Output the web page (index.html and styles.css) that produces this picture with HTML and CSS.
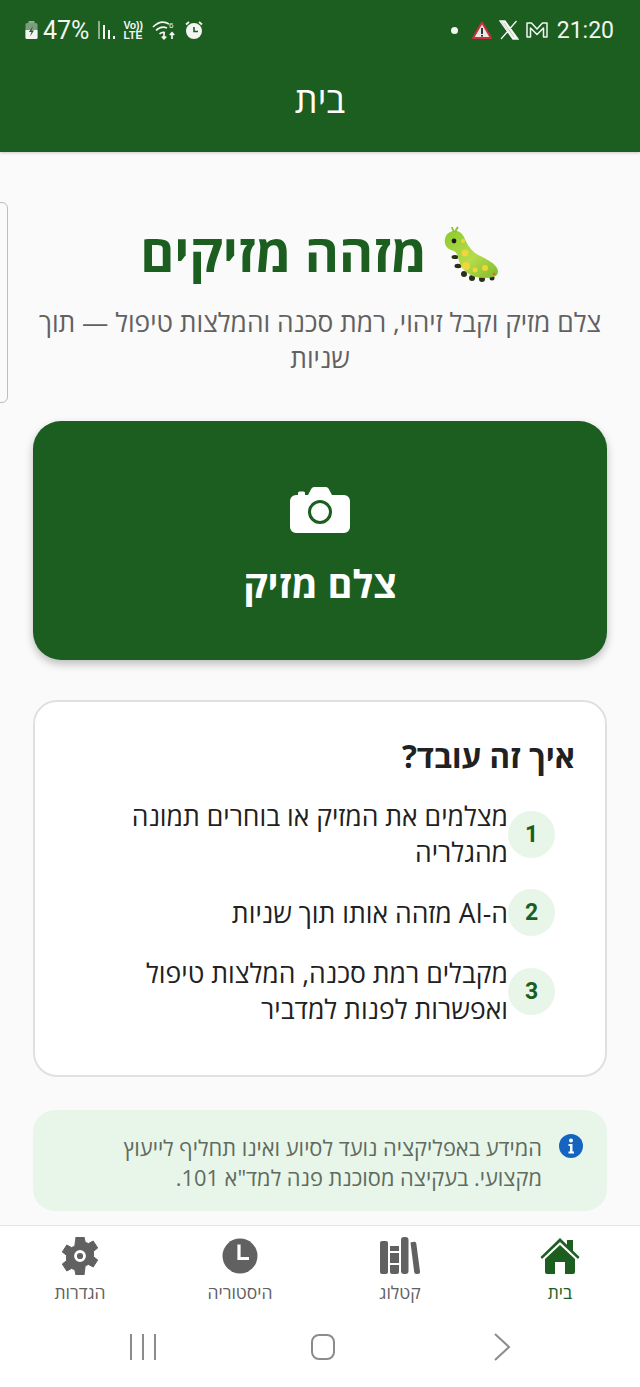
FILE: index.html
```html
<!DOCTYPE html>
<html lang="he" dir="rtl">
<head>
<meta charset="utf-8">
<title>מזהה מזיקים</title>
<link rel="stylesheet" href="styles.css">
</head>
<body>
<div class="app">
  <header class="header">
    <div class="status" dir="ltr">
      <div class="status-side">
        <svg class="ic-batt" viewBox="0 0 13 18"><rect x="3.500" y="0" width="6" height="2" fill="#8fae90"/><rect x="0.500" y="2" width="12" height="16" rx="1.500" fill="#7d9c7e"/><path d="M0.500 9H12.500V16.500a1.500 1.500 0 0 1-1.500 1.500H2a1.500 1.500 0 0 1-1.500-1.500Z" fill="#f2f5f2"/><path d="M8 5 4 11h2.500L5 15.500 9 9.500H6.500Z" fill="#1b5e20"/></svg>
        <span class="status-pct">47%</span>
        <svg class="ic-sig" viewBox="0 0 18 18"><rect x="0" y="0" width="2" height="18" fill="#8fae90"/><rect x="5" y="4" width="2" height="14" fill="#f2f5f2"/><rect x="10" y="9" width="2" height="9" fill="#f2f5f2"/><rect x="15" y="15" width="2" height="3" fill="#f2f5f2"/></svg>
        <span class="volte">Vo))<br>LTE</span>
        <svg class="ic-wifi" viewBox="0 0 25 20" fill="none" stroke="#f2f5f2" stroke-width="1.700"><path d="M1 7C6 2 12 1 17 4"/><path d="M4 10.500C7.500 7 11.500 6.500 15 8"/><path d="M7.500 14C9 12.500 11 12 13 12.500"/><path d="M12 13v5.500M9.800 16.500l2.200 2.300 2.200-2.300M20 19v-6M17.800 15l2.200-2.200 2.200 2.200"/><text x="17" y="8" class="wifi-six">6</text></svg>
        <svg class="ic-alarm" viewBox="0 0 18 18"><circle cx="9" cy="10" r="8" fill="#f2f5f2"/><path d="M9 6v4.500h4" stroke="#1b5e20" stroke-width="1.600" fill="none"/><path d="M1 3.500 4 1M17 3.500 14 1" stroke="#f2f5f2" stroke-width="1.800"/></svg>
      </div>
      <div class="status-side">
        <span class="dot"></span>
        <svg class="ic-warn" viewBox="0 0 20 18"><path d="M10 1.500 19 17H1Z" fill="#e9e9e9" stroke="#c9303a" stroke-width="2" stroke-linejoin="round"/><rect x="9" y="7" width="2" height="6" fill="#333"/><rect x="9" y="14" width="2" height="1.600" fill="#333"/></svg>
        <svg class="ic-x" viewBox="0 0 20 20"><path d="M1 1h5L19 19h-5ZM3.800 2.300 14.500 17.700h1.800L5.600 2.300ZM17.500 1 11 8.500M2 19l7-8" fill="none" stroke="#f2f5f2" stroke-width="1.300"/></svg>
        <svg class="ic-m" viewBox="0 0 22 18" fill="none" stroke="#f2f5f2" stroke-width="1.500"><path d="M1 2h4.500L11 8l5.500-6H21v14h-3.500V7L11 13.500 4.500 7v9H1Z" stroke-linejoin="round"/></svg>
        <span class="status-text">21:20</span>
      </div>
    </div>
    <h1 class="header-title">בית</h1>
  </header>

  <main class="content">
    <div class="edge-tab"></div>
    <section class="hero">
      <h2 class="hero-title">
        <svg class="bug" viewBox="0 0 56 58">
          <defs><linearGradient id="bugfill" x1="0" y1="0" x2="1" y2="1"><stop offset="0" stop-color="#8ccb2e"/><stop offset=".55" stop-color="#b7dc4a"/><stop offset="1" stop-color="#7fbb2a"/></linearGradient></defs>
          <g fill="#2a2f1a"><ellipse cx="11" cy="32" rx="3.500" ry="2"/><ellipse cx="14" cy="41" rx="3.500" ry="2.200"/><circle cx="20" cy="49" r="3"/><circle cx="28" cy="53" r="3"/><circle cx="38" cy="54" r="3"/><circle cx="48" cy="53" r="2.500"/></g>
          <path d="M9 6C14 5 18 8 20 12C23 19 26 24 31 28C37 32 49 36 53 43C55 47 54 51 49 52C40 54 31 53 25 49C19 45 15 39 14 32C13 28 11 26 7 25C2 23 0 19 1 14C2 9 5 7 9 6Z" fill="url(#bugfill)"/>
          <g fill="#f0d63a"><circle cx="21" cy="28" r="3.500"/><circle cx="22" cy="41" r="4"/><circle cx="31" cy="45" r="2.500"/><circle cx="41" cy="43" r="3"/><circle cx="19" cy="16" r="2"/></g>
          <circle cx="10" cy="16" r="2.400" fill="#1a1a1a"/>
          <circle cx="50" cy="49" r="1.300" fill="#e06a2a"/>
          <path d="M10 7C9 5 8 3 8 2M11 7C12 5 13 3 14 2" stroke="#8fc03a" stroke-width="1.800" fill="none"/>
        </svg>
        <span>מזהה מזיקים</span>
      </h2>
      <p class="hero-sub">צלם מזיק וקבל זיהוי, רמת סכנה והמלצות טיפול — תוך שניות</p>
    </section>

    <button class="shoot">
      <svg class="cam" viewBox="0 0 60 46"><path d="M6 8h2V6a1.500 1.500 0 0 1 1.500-1.500h4A1.500 1.500 0 0 1 15 6v2h3l3.500-6.500A3 3 0 0 1 24 0h12a3 3 0 0 1 2.500 1.500L42 8h12a6 6 0 0 1 6 6v26a6 6 0 0 1-6 6H6a6 6 0 0 1-6-6V14a6 6 0 0 1 6-6Z" fill="#fff"/><circle cx="30" cy="25" r="10.500" fill="none" stroke="#1b5e20" stroke-width="3"/></svg>
      <span>צלם מזיק</span>
    </button>

    <section class="card">
      <h3 class="card-title">איך זה עובד?</h3>
      <ol class="steps">
        <li class="step"><span class="num">1</span><span class="step-text">מצלמים את המזיק או בוחרים תמונה מהגלריה</span></li>
        <li class="step"><span class="num">2</span><span class="step-text">ה-AI מזהה אותו תוך שניות</span></li>
        <li class="step"><span class="num">3</span><span class="step-text">מקבלים רמת סכנה, המלצות טיפול ואפשרות לפנות למדביר</span></li>
      </ol>
    </section>

    <section class="notice">
      <svg class="info" viewBox="0 0 24 24"><circle cx="12" cy="12" r="12" fill="#1565c0"/><circle cx="12" cy="6.500" r="2" fill="#fff"/><path d="M9.500 10h4v7.500h1.500v2H9.500v-2H11V12H9.500Z" fill="#fff"/></svg>
      <p class="notice-text">המידע באפליקציה נועד לסיוע ואינו תחליף לייעוץ מקצועי. בעקיצה מסוכנת פנה למד"א 101.</p>
    </section>
  </main>

  <nav class="tabs">
    <div class="tab active">
      <svg class="tab-ic" viewBox="0 0 40 38"><path d="M20 1 39.500 20 38 22 20 5 2 22 .5 20Z" fill="#1b5e20"/><path d="M27 3h6v12l-6-6Z" fill="#1b5e20"/><path d="M20 8 35 22V35a2 2 0 0 1-2 2H25V25H15v12H7a2 2 0 0 1-2-2V22Z" fill="#1b5e20"/></svg>
      <span>בית</span>
    </div>
    <div class="tab">
      <svg class="tab-ic" viewBox="0 0 40 38"><rect x="0" y="4" width="8" height="33" rx="2" fill="#616161"/><path d="M10 9h9v5h-9ZM10 16h9v10h-9ZM10 28h9v7a2 2 0 0 1-2 2h-5a2 2 0 0 1-2-2Z" fill="#616161"/><rect x="21" y="0" width="7.500" height="37" rx="3" fill="#616161"/><path d="M30.500 5.500 34 4.800a2 2 0 0 1 2.300 1.700L40 34.500a2.200 2.200 0 0 1-2 2.500l-1.500.1a2.200 2.200 0 0 1-2.300-2Z" fill="#616161"/></svg>
      <span>קטלוג</span>
    </div>
    <div class="tab">
      <svg class="tab-ic" viewBox="0 0 40 38"><circle cx="20" cy="19" r="17.500" fill="#616161"/><path d="M19 7.500v14h10" fill="none" stroke="#fff" stroke-width="3.200"/></svg>
      <span>היסטוריה</span>
    </div>
    <div class="tab">
      <svg class="tab-ic" viewBox="0 0 40 38"><path d="M16 0h8l1.200 5.200 3.300 1.400 4.700-2.600 4.500 7-4.200 3.200v5.600l4.200 3.200-4.500 7-4.700-2.600-3.300 1.400L24 38h-8l-1.200-5.200-3.300-1.400-4.700 2.600-4.500-7 4.200-3.200v-5.600L2.300 15l4.500-7 4.700 2.600 3.300-1.400Z" fill="#616161" stroke="#616161" stroke-width="1" stroke-linejoin="round"/><circle cx="20" cy="19" r="4.500" fill="none" stroke="#fff" stroke-width="2.800"/></svg>
      <span>הגדרות</span>
    </div>
  </nav>

  <div class="sysnav" dir="ltr">
    <svg class="sys-ic" viewBox="0 0 28 28" fill="none" stroke="#8c8c8c" stroke-width="2"><path d="M2 1v26M14 1v26M26 1v26"/></svg>
    <svg class="sys-ic" viewBox="0 0 28 28" fill="none" stroke="#8c8c8c" stroke-width="2"><rect x="3" y="2" width="22" height="24" rx="7"/></svg>
    <svg class="sys-ic" viewBox="0 0 28 28" fill="none" stroke="#8c8c8c" stroke-width="2"><path d="M7 1l14 13L7 27"/></svg>
  </div>
</div>
</body>
</html>
```
FILE: styles.css
```css
* { box-sizing: border-box; }
html, body { margin: 0; padding: 0; }
body { font-family: "Open Sans", "Liberation Sans", sans-serif; background: #fafafa; }
.app { width: 640px; height: 1387px; display: flex; flex-direction: column; overflow: hidden; position: relative; }

.header { height: 152px; background: #1b5e20; color: #fff; flex: none; box-shadow: 0 1px 3px rgba(0,0,0,.2); position: relative; z-index: 1; }
.status { height: 60px; padding: 0 26px 0 25px; display: flex; justify-content: space-between; align-items: center; color: #f2f5f2; }
.status-side { display: flex; align-items: center; gap: 5px; }
.status-text { font-family: Roboto, sans-serif; font-size: 23px; margin-left: 4px; }
.status-pct { font-family: Roboto, sans-serif; font-size: 25px; }
.ic-batt { width: 13px; height: 18px; }
.ic-sig { width: 18px; height: 18px; margin-left: 4px; }
.volte { font-family: "Liberation Sans", sans-serif; font-size: 10.500px; line-height: 10.500px; font-weight: 700; width: 20px; margin: 0 4px 0 2px; }
.ic-wifi { width: 25px; height: 20px; }
.wifi-six { font-size: 8px; fill: #f2f5f2; stroke: none; font-family: "Liberation Sans", sans-serif; }
.ic-alarm { width: 18px; height: 18px; margin-left: 3px; }
.dot { width: 7px; height: 7px; border-radius: 50%; background: #f2f5f2; margin-right: 9px; }
.ic-warn { width: 20px; height: 18px; }
.ic-x { width: 20px; height: 20px; margin-left: 2px; }
.ic-m { width: 22px; height: 18px; margin-left: 2px; }
.header-title { margin: 0; height: 92px; padding-bottom: 12px; display: flex; align-items: center; justify-content: center; font-size: 36px; font-weight: 400; line-height: 1; }

.content { flex: 1; min-height: 0; padding: 68px 33px 0; display: flex; flex-direction: column; overflow: hidden; position: relative; }
.edge-tab { position: absolute; left: -10px; top: 50px; width: 18px; height: 201px; border: 1.500px solid #bdbdbd; border-radius: 6px; }

.hero { text-align: center; }
.hero-title { margin: 0; display: flex; justify-content: center; align-items: center; gap: 17px; color: #1b5e20; font-size: 52px; font-weight: 700; line-height: 64px; }
.bug { width: 56px; height: 58px; margin-top: 4px; }
.hero-sub { margin: 20px 0 0; color: #616161; font-size: 26.300px; line-height: 36px; }

.shoot { margin-top: 45px; height: 239px; border: 0; border-radius: 28px; background: #1b5e20; color: #fff; display: flex; flex-direction: column; align-items: center; justify-content: flex-start; gap: 27px; padding: 66px 0 0; font: inherit; font-size: 38px; font-weight: 700; line-height: 46px; box-shadow: 0 4px 8px rgba(0,0,0,.25); flex: none; }
.cam { width: 60px; height: 46px; }

.card { margin-top: 40px; height: 377px; background: #fff; border: 2px solid #e0e0e0; border-radius: 24px; padding: 32px 30px 0; flex: none; }
.card-title { margin: 0 0 20px; color: #212121; font-size: 31.300px; font-weight: 700; line-height: 44px; }
.steps { list-style: none; margin: 0; padding: 0 20px 0 0; display: flex; flex-direction: column; gap: 19px; }
.step { display: flex; align-items: center; }
.num { flex: none; width: 47px; height: 47px; border-radius: 50%; background: #e8f5e9; color: #1b5e20; display: flex; align-items: center; justify-content: center; font-family: Roboto, sans-serif; font-size: 23px; font-weight: 700; }
.step-text { color: #212121; font-size: 26.500px; line-height: 36px; max-width: 400px; }

.notice { margin-top: 33px; height: 101px; border-radius: 22px; background: #e8f5e9; padding: 24px 24px 0; display: flex; gap: 17px; align-items: flex-start; flex: none; }
.info { width: 24px; height: 24px; flex: none; }
.notice-text { margin: -1px 0 0; color: #5f6b60; font-size: 21.800px; line-height: 30px; max-width: 440px; }

.tabs { height: 86px; flex: none; background: #fff; border-top: 1.500px solid #e6e6e6; display: flex; position: relative; padding-top: 11px; }
.tab { flex: 1; display: flex; flex-direction: column; align-items: center; gap: 6px; color: #616161; font-size: 17.500px; line-height: 22px; }
.tab.active { color: #1b5e20; font-weight: 500; }
.tab-ic { width: 40px; height: 38px; }

.sysnav { height: 76px; flex: none; background: #fff; display: flex; justify-content: space-between; padding: 0 124px 4px 129px; align-items: center; }
.sys-ic { width: 28px; height: 28px; }
```
